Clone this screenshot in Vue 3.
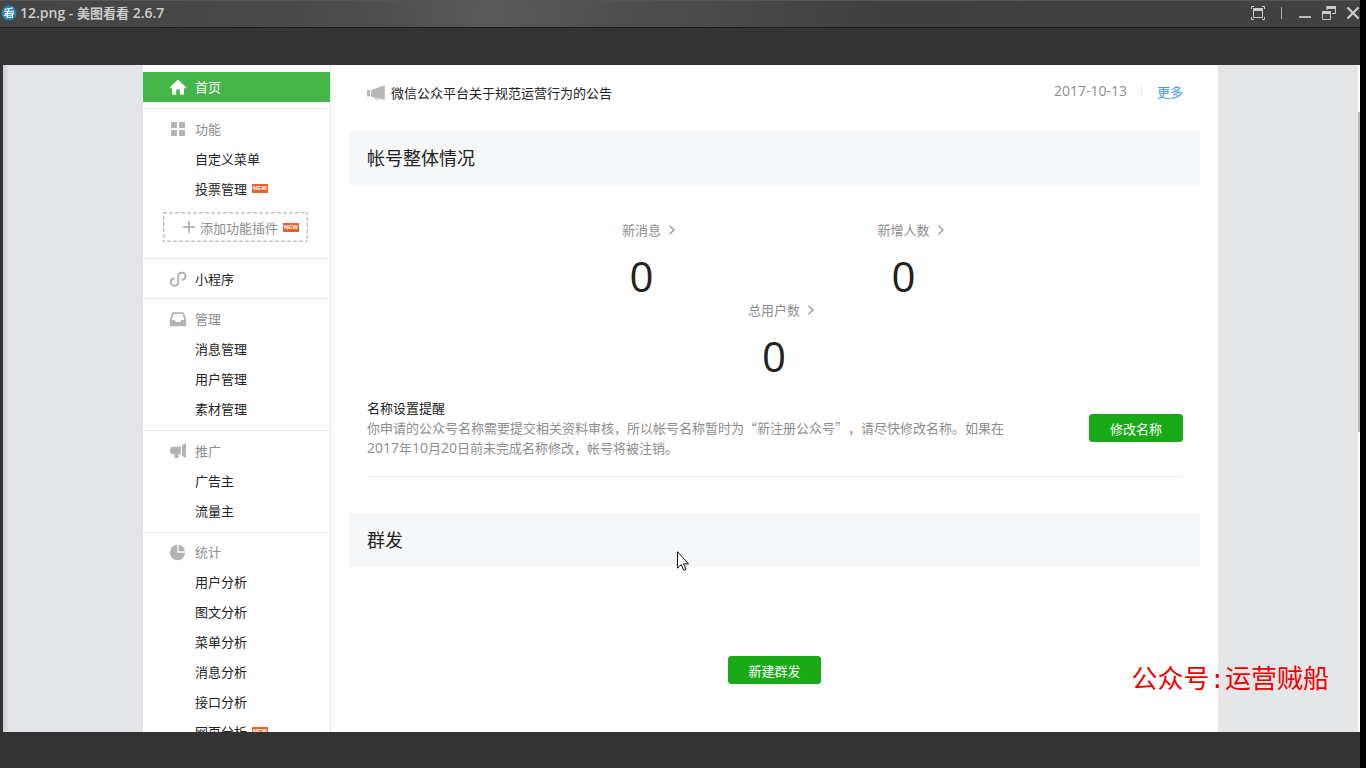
<script setup>
const stats = [
  { label: '新消息', value: 0 },
  { label: '新增人数', value: 0 },
  { label: '总用户数', value: 0, wide: true },
]

const manageItems = ['消息管理', '用户管理', '素材管理']
const promoItems = ['广告主', '流量主']
const analysisItems = [
  { name: '用户分析' },
  { name: '图文分析' },
  { name: '菜单分析' },
  { name: '消息分析' },
  { name: '接口分析' },
  { name: '网页分析', fresh: true },
]
</script>

<template>
  <div class="window" lang="zh-CN">
    <header class="titlebar">
      <svg class="logo" width="16" height="16" viewBox="0 0 16 16" aria-hidden="true">
        <circle cx="8" cy="8" r="7.5" fill="#2583b4" />
        <path d="M3.5 4.2 12 3M3 6.2h10M3.8 8.4h9.4M8 4C7 7.500 5.500 9.500 3 11M6 13V8.500h5.500V13M6 10.200h5.500M6 12.200h5.500" fill="none" stroke="#fff" stroke-width="1.100" />
      </svg>
      <h1 class="title">12.png - <span class="app-name">美图看看</span> 2.6.7</h1>
      <div class="controls">
        <button class="ctl" type="button" aria-label="全屏">
          <svg width="14" height="14" viewBox="0 0 14 14">
            <path d="M.5 3V.5H3M11 .5h2.500V3M13.500 11v2.500H11M3 13.500H.5V11" fill="none" stroke="#ccc" />
            <path d="M2.500 2.500h9v9h-9z" fill="none" stroke="#c4c4c4" />
            <path d="M2 2h10v3H2z" fill="#ccc" />
          </svg>
        </button>
        <span class="split"></span>
        <button class="ctl" type="button" aria-label="最小化">
          <svg width="14" height="14" viewBox="0 0 14 14"><path d="M1 10h12v2H1z" fill="#bbb" /></svg>
        </button>
        <button class="ctl" type="button" aria-label="还原">
          <svg width="14" height="14" viewBox="0 0 14 14">
            <path d="M5 4V.5h8.500v7H10" fill="none" stroke="#ccc" />
            <path d="M4.500 0H14v3H4.500z" fill="#ccc" />
            <path d="M.5 5.500h8v8h-8z" fill="#444" stroke="#c0c0c0" />
            <path d="M0 5h9v3H0z" fill="#ccc" />
          </svg>
        </button>
        <button class="ctl" type="button" aria-label="关闭">
          <svg width="14" height="14" viewBox="0 0 14 14"><path d="m1.500 1.500 11 11m0-11-11 11" fill="none" stroke="#ccc" stroke-width="2.200" /></svg>
        </button>
      </div>
    </header>

    <div class="viewer">
      <div class="page">
        <nav class="side">
          <a class="row home" href="#">
            <svg class="ico" width="18" height="18" viewBox="0 0 18 18"><path d="M9 1.500 17 9.300c.4.500.2.900-.4.900H15V16c0 .400-.3.700-.7.700h-3.500V12c0-.4-.2-.6-.6-.6H7.800c-.4 0-.6.2-.6.600v4.700H3.700c-.4 0-.7-.3-.7-.7v-5.800H1.400c-.6 0-.8-.4-.4-.9z" fill="#fff" /></svg>
            首页
          </a>
          <section class="group">
            <h2 class="row head">
              <svg class="ico" width="18" height="18" viewBox="0 0 18 18"><path d="M2 2h6v6H2zM10 2h6v6h-6zM2 10h6v6H2zM10 10h6v6h-6z" fill="#b3b3b3" /></svg>
              功能
            </h2>
            <a class="row item" href="#">自定义菜单</a>
            <a class="row item" href="#">投票管理<span class="new">NEW</span></a>
            <button class="plugin" type="button">
              <svg class="dash" width="100%" height="100%" aria-hidden="true"><rect width="100%" height="100%" fill="none" stroke="#c4c4c4" stroke-width="3" stroke-dasharray="4 2" /></svg>
              <svg class="plus" width="12" height="12" viewBox="0 0 12 12"><path d="M6 0v12M0 6h12" stroke="#a5a5a5" stroke-width="1.500" /></svg>
              <span>添加功能插件</span><span class="new">NEW</span>
            </button>
          </section>
          <section class="group mini">
            <a class="row" href="#">
              <svg class="ico" width="18" height="18" viewBox="0 0 18 18"><path d="M4.800 8.500C2.900 8.900 1.700 10.200 1.700 12c0 2.100 1.700 3.700 3.700 3.700 2.200 0 3.800-1.600 3.800-3.700V6.500c0-2.200 1.500-3.800 3.700-3.800 2 0 3.600 1.500 3.600 3.600 0 1.800-1.200 3.100-3 3.500" fill="none" stroke="#b0b0b0" stroke-width="1.900" stroke-linecap="round" /></svg>
              小程序
            </a>
          </section>
          <section class="group">
            <h2 class="row head">
              <svg class="ico" width="18" height="18" viewBox="0 0 18 18"><path fill-rule="evenodd" d="M4 2.200h10c.5 0 .8.200 1 .700L17.200 10v5.300c0 .600-.4 1-1 1H1.800c-.6 0-1-.4-1-1V10L3 2.900c.2-.5.500-.7 1-.7zM4.500 4 2.800 10h2.500c.9 0 .9 2 2 2h3.400c1.100 0 1.100-2 2-2h2.500L13.500 4z" fill="#b3b3b3" /></svg>
              管理
            </h2>
            <a v-for="name in manageItems" :key="name" class="row item" href="#">{{ name }}</a>
          </section>
          <section class="group">
            <h2 class="row head">
              <svg class="ico" width="18" height="18" viewBox="0 0 18 18"><path d="M11.800 4v9L9.500 11.700V15c0 .6-.4.900-.9.900H6.300c-.5 0-.8-.3-.8-.9v-2.700H4.200C2.200 12.300.8 10.700.8 8.500s1.400-3.800 3.400-3.800h5.400zM13 3.300l2.700-1.800h1.200v14h-1.200L13 13.700z" fill="#b3b3b3" /></svg>
              推广
            </h2>
            <a v-for="name in promoItems" :key="name" class="row item" href="#">{{ name }}</a>
          </section>
          <section class="group stat-group">
            <h2 class="row head">
              <svg class="ico" width="18" height="18" viewBox="0 0 18 18"><circle cx="8.500" cy="9.500" r="7.700" fill="#b3b3b3" /><path d="M9 1v8h8" fill="none" stroke="#fff" stroke-width="1.300" /></svg>
              统计
            </h2>
            <a v-for="item in analysisItems" :key="item.name" class="row item" href="#">{{ item.name }}<span v-if="item.fresh" class="new">NEW</span></a>
          </section>
        </nav>

        <main class="main">
          <div class="notice">
            <svg width="18" height="16" viewBox="0 0 18 16"><path d="M0 5h3v6.500H0zM4 5 17.800.3v14.800L13 13.600c-.6 2-4.800 2-5.700-1.100L4 11.500z" fill="#b8b8b8" /><path d="M8.500 12.700c.8 1.400 2.600 1.500 3.300.6z" fill="#fff" /></svg>
            <a class="notice-text" href="#">微信公众平台关于规范运营行为的公告</a>
            <div class="notice-meta">
              <time class="date">2017-10-13</time>
              <a class="more" href="#">更多</a>
            </div>
          </div>

          <h2 class="band">帐号整体情况</h2>
          <div class="stats">
            <div v-for="s in stats" :key="s.label" class="stat" :class="{ wide: s.wide }">
              <a class="stat-label" href="#">{{ s.label }}<svg class="chev" width="8" height="10" viewBox="0 0 8 10"><path d="m1.500.700 4.500 4.300-4.500 4.300" fill="none" stroke="#999" stroke-width="1.400" /></svg></a>
              <strong class="stat-value">{{ s.value }}</strong>
            </div>
          </div>

          <div class="alert">
            <div class="alert-text">
              <h3>名称设置提醒</h3>
              <p>你申请的公众号名称需要提交相关资料审核，所以帐号名称暂时为“新注册公众号”，请尽快修改名称。如果在<span class="num">2017</span>年<span class="num">10</span>月<span class="num">20</span>日前未完成名称修改，帐号将被注销。</p>
            </div>
            <button class="btn" type="button">修改名称</button>
          </div>

          <h2 class="band">群发</h2>
          <div class="send">
            <button class="btn" type="button">新建群发</button>
          </div>
        </main>
      </div>
      <div class="scroll"><div class="thumb"></div></div>
      <div class="watermark">公众号:运营贼船</div>
      <svg class="cursor" width="12" height="20" viewBox="0 0 12 20"><path d="M.5.700v16.500l3.700-3.600 2.600 5.700 2.300-1-2.600-5.500h5z" fill="#fff" stroke="#111" /></svg>
    </div>
  </div>
</template>

<style>
body {
  margin: 0;
  background: #000;
}
</style>

<style scoped>
* {
  box-sizing: border-box;
}
.window {
  display: flex;
  flex-direction: column;
  height: 100vh;
  margin-right: 6px;
  padding-bottom: 36px;
  background: #333;
  color: #222;
  font-family: "Noto Sans CJK SC", sans-serif;
  font-size: 13px;
  overflow: hidden;
}
h1, h2, h3, p {
  margin: 0;
  font-size: 13px;
  font-weight: 400;
}
a {
  color: inherit;
  text-decoration: none;
}
button {
  font: inherit;
  cursor: pointer;
}
.titlebar {
  display: flex;
  align-items: center;
  flex: none;
  height: 28px;
  padding: 0 0 2px 1px;
  border-top: 1px solid #555;
  border-bottom: 1px solid #1c1c1c;
  background: linear-gradient(90deg, #444 0%, #484848 22%, #595959 36%, #4b4b4b 50%, #3f3f3f 65%, #414141 100%);
}
.title {
  margin-left: 3px;
  color: #ccc;
  font-family: "Open Sans", "Noto Sans CJK SC", sans-serif;
  font-size: 14px;
  font-weight: 600;
  line-height: 24px;
}
.app-name {
  font-size: 13px;
}
.controls {
  display: flex;
  align-items: center;
  gap: 10px;
  margin-left: auto;
}
.ctl {
  display: block;
  width: 14px;
  height: 14px;
  padding: 0;
  border: 0;
  background: none;
}
.ctl svg {
  display: block;
}
.split {
  width: 1px;
  height: 12px;
  margin: 0 6px;
  background: #aaa;
}
.viewer {
  position: relative;
  display: flex;
  flex: 1;
  min-height: 0;
  margin: 37px 0 0 3px;
  background: linear-gradient(90deg, #cfcfd1 0, #e4e5e8 6px, #e4e6e8 100%);
  overflow: hidden;
}
.page {
  display: flex;
  flex: 1;
  margin: 0 140px;
  background: #fff;
}
.scroll {
  width: 2px;
  padding-top: 47px;
  background: #fff;
}
.thumb {
  height: 320px;
  background: #bcbcbc;
}
.side {
  flex: none;
  width: 188px;
  padding-top: 7px;
  border-right: 1px solid #e7e7eb;
}
.row {
  display: flex;
  align-items: center;
  height: 30px;
  padding: 0 0 2px 26px;
}
.ico {
  flex: none;
  margin: 2px 8px 0 0;
}
.home {
  margin-bottom: 6px;
  background: #44b549;
  color: #fff;
}
.group {
  padding: 5px 0 6px;
  border-top: 1px solid #e7e7eb;
}
.mini {
  padding-bottom: 4px;
}
.stat-group {
  padding-top: 4px;
}
.head {
  color: #8d8d8d;
}
.item {
  padding-left: 52px;
}
.new {
  width: 16px;
  height: 9px;
  margin-left: 5px;
  background: #e8602d;
  color: #fff;
  font: 700 6px/9px "Liberation Sans", sans-serif;
  text-align: center;
}
.plugin {
  position: relative;
  display: flex;
  align-items: center;
  width: 145px;
  height: 30px;
  margin: 8px 0 10px 20px;
  padding: 0 0 0 20px;
  border: 0;
  background: #fff;
  color: #8d8d8d;
}
.dash {
  position: absolute;
  inset: 0;
}
.plus {
  margin-right: 5px;
}
.main {
  flex: 1;
  min-width: 0;
  padding: 0 18px;
}
.notice {
  display: flex;
  align-items: center;
  height: 56px;
  margin-bottom: 10px;
  padding: 0 17px 0 18px;
}
.notice-text {
  margin-left: 6px;
  padding-bottom: 2px;
}
.notice-meta {
  display: flex;
  align-items: center;
  margin-left: auto;
  padding-bottom: 4px;
}
.date {
  padding-right: 14px;
  border-right: 1px solid #e7e7eb;
  color: #8d8d8d;
  font: 14px/12px "Open Sans", sans-serif;
}
.more {
  margin-left: 15px;
  color: #459ae9;
}
.band {
  height: 54px;
  padding-left: 18px;
  background: #f6f7f9;
  color: #222;
  font-size: 18px;
  line-height: 52px;
}
.stats {
  display: grid;
  grid-template-columns: 262px 262px;
  justify-content: center;
  padding: 35px 4px 0 0;
}
.stat {
  display: flex;
  flex-direction: column;
  align-items: center;
  height: 80px;
}
.wide {
  grid-column: span 2;
  padding-left: 3px;
}
.stat-label {
  position: relative;
  color: #8d8d8d;
  line-height: 20px;
}
.chev {
  position: absolute;
  left: 100%;
  top: 5px;
  margin-left: 7px;
}
.stat-value {
  margin-top: 6px;
  font: 400 42px/60px "Open Sans", sans-serif;
}
.alert {
  display: flex;
  align-items: center;
  justify-content: space-between;
  margin: 0 17px 36px 18px;
  padding: 18px 0;
  border-bottom: 1px solid #e7e7eb;
  line-height: 20px;
}
.alert-text {
  max-width: 650px;
}
.alert p {
  color: #8d8d8d;
  text-spacing-trim: space-all;
}
.num {
  font-family: "Open Sans", sans-serif;
  font-size: 14px;
  line-height: 1;
}
.btn {
  height: 28px;
  padding: 0 20px;
  border: 1px solid #1aa817;
  border-radius: 3px;
  background: #1aaa17;
  color: #fff;
  line-height: 25px;
}
.send {
  display: flex;
  justify-content: center;
  padding-top: 89px;
}
.send .btn {
  padding: 0 19px;
}
.watermark {
  position: absolute;
  right: 31px;
  bottom: 31px;
  color: #f00000;
  font: 26px/40px "Liberation Mono", "Noto Sans CJK SC", monospace;
}
.cursor {
  position: absolute;
  left: 674px;
  top: 486px;
}
</style>
